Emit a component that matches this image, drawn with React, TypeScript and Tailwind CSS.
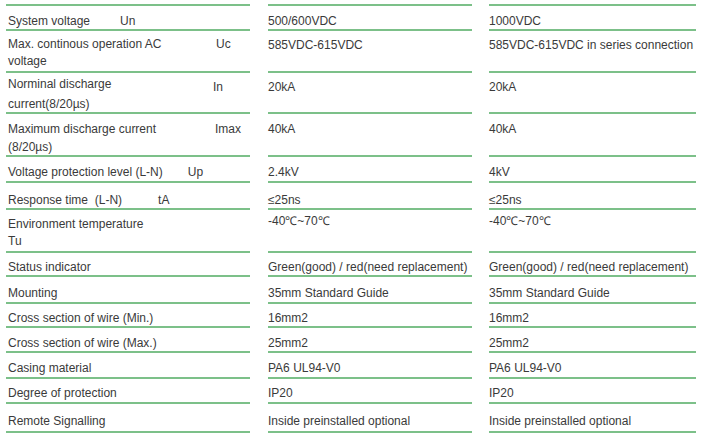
import type { ReactNode } from "react";

interface SpecRow {
  h: string;
  pt: string;
  label: ReactNode;
  valuePt?: string;
  a: string;
  b: string;
}

const rows: SpecRow[] = [
  {
    h: "h-[25px]",
    pt: "pt-[6px]",
    label: (
      <>
        System voltage<span className="ml-[30px]">Un</span>
      </>
    ),
    a: "500/600VDC",
    b: "1000VDC",
  },
  {
    h: "h-[42px]",
    pt: "pt-[5px]",
    label: (
      <div className="flex">
        <div className="w-[208px] leading-[17px]">
          Max. continous operation AC
          <br />
          voltage
        </div>
        <span className="leading-[17px]">Uc</span>
      </div>
    ),
    a: "585VDC-615VDC",
    b: "585VDC-615VDC in series connection",
  },
  {
    h: "h-[41px]",
    pt: "pt-[1px]",
    valuePt: "pt-[5px]",
    label: (
      <div className="flex">
        <div className="w-[205px] leading-[20px]">
          Norminal discharge
          <br />
          current(8/20µs)
        </div>
        <span className="pt-[4px]">In</span>
      </div>
    ),
    a: "20kA",
    b: "20kA",
  },
  {
    h: "h-[43px]",
    pt: "pt-[6px]",
    label: (
      <div className="flex">
        <div className="w-[207px]">
          Maximum discharge current
          <br />
          (8/20µs)
        </div>
        <span>Imax</span>
      </div>
    ),
    a: "40kA",
    b: "40kA",
  },
  {
    h: "h-[26px]",
    pt: "pt-[6px]",
    label: (
      <>
        Voltage protection level (L-N)<span className="ml-[25px]">Up</span>
      </>
    ),
    a: "2.4kV",
    b: "4kV",
  },
  {
    h: "h-[27px]",
    pt: "pt-[8px]",
    label: (
      <>
        Response time{"\u00a0"} (L-N)<span className="ml-[36px]">tA</span>
      </>
    ),
    a: "≤25ns",
    b: "≤25ns",
  },
  {
    h: "h-[43px]",
    pt: "pt-[6px]",
    valuePt: "pt-[2px]",
    label: (
      <div className="leading-[17px]">
        Environment temperature
        <br />
        Tu
      </div>
    ),
    a: "-40℃~70℃",
    b: "-40℃~70℃",
  },
  {
    h: "h-[24px]",
    pt: "pt-[5px]",
    label: "Status indicator",
    a: "Green(good) / red(need replacement)",
    b: "Green(good) / red(need replacement)",
  },
  { h: "h-[27px]", pt: "pt-[7px]", label: "Mounting", a: "35mm Standard Guide", b: "35mm Standard Guide" },
  { h: "h-[24px]", pt: "pt-[5px]", label: "Cross section of wire (Min.)", a: "16mm2", b: "16mm2" },
  { h: "h-[25px]", pt: "pt-[6px]", label: "Cross section of wire (Max.)", a: "25mm2", b: "25mm2" },
  { h: "h-[26px]", pt: "pt-[6px]", label: "Casing material", a: "PA6 UL94-V0", b: "PA6 UL94-V0" },
  { h: "h-[25px]", pt: "pt-[5px]", label: "Degree of protection", a: "IP20", b: "IP20" },
  {
    h: "h-[29px]",
    pt: "pt-[8px]",
    label: "Remote Signalling",
    a: "Inside preinstalled optional",
    b: "Inside preinstalled optional",
  },
];

const line = "border-b-2 border-[#7cc089]";

export default function App() {
  return (
    <div className="h-[442px] w-[704px] bg-white pl-[6px] font-['Liberation_Sans',Arial,sans-serif] text-[12px] leading-[18px] text-[#3a3a3a]">
      {/* top rule */}
      <div className="flex h-[6px]">
        <div className={`w-[244px] ${line}`} />
        <div className={`ml-[18px] w-[204px] ${line}`} />
        <div className={`ml-[17px] w-[207px] ${line}`} />
      </div>

      {rows.map((r, i) => (
        <div key={i} className={`flex ${r.h}`}>
          <div className={`w-[244px] pl-[2px] ${r.pt} ${line}`}>{r.label}</div>
          <div className={`ml-[18px] w-[204px] whitespace-nowrap ${r.valuePt ?? r.pt} ${line}`}>{r.a}</div>
          <div className={`ml-[17px] w-[207px] whitespace-nowrap ${r.valuePt ?? r.pt} ${line}`}>{r.b}</div>
        </div>
      ))}
    </div>
  );
}
